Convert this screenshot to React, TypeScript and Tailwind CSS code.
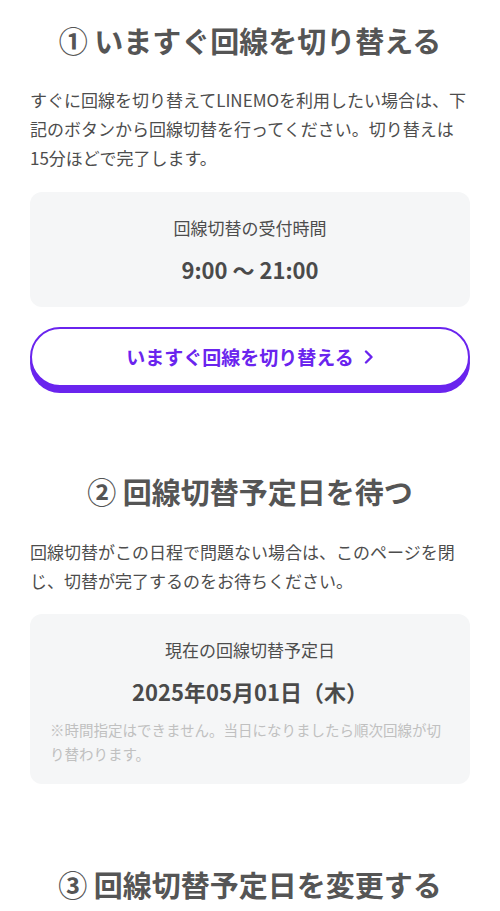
import React from 'react';

const PURPLE = '#6a24ee';

const Heading: React.FC<{ children: React.ReactNode; className?: string }> = ({
  children,
  className = '',
}) => (
  <h2
    className={`text-center text-[29px] font-bold leading-[1.5] text-[#555555] ${className}`}
  >
    {children}
  </h2>
);

const InfoBox: React.FC<{ label: string; value: string; note?: string }> = ({
  label,
  value,
  note,
}) => (
  <div
    className={`rounded-[12px] bg-[#f5f6f7] px-[20px] pt-[22px] ${note ? 'pb-[19px]' : 'pb-[21px]'}`}
  >
    <p className="text-center text-[17px] leading-[27px] text-[#4d4d4d]">{label}</p>
    <p className="mt-[12px] text-center text-[22px] font-bold leading-[33px] text-[#4a4a4a]">
      {value}
    </p>
    {note && (
      <p className="mt-[10px] text-[14.5px] leading-[23.5px] text-[#c0c0c0]">{note}</p>
    )}
  </div>
);

const App: React.FC = () => {
  return (
    <div
      className="min-h-[911px] bg-white px-[30px]"
      style={{ fontFamily: '"Noto Sans CJK JP", "Noto Sans", sans-serif' }}
    >
      {/* step 1 */}
      <section className="pt-[19px]">
        <Heading>① いますぐ回線を切り替える</Heading>
        <p className="mt-[22px] text-[17px] leading-[1.72] text-[#4d4d4d]">
          すぐに回線を切り替えてLINEMOを利用したい場合は、下記のボタンから回線切替を行ってください。切り替えは15分ほどで完了します。
        </p>
        <div className="mt-[20px]">
          <InfoBox label="回線切替の受付時間" value="9:00 〜 21:00" />
        </div>
        <button
          type="button"
          className="mt-[20px] flex h-[60px] w-full items-center justify-center gap-[10px] rounded-full border-2 border-[#6a24ee] bg-white shadow-[0_6px_0_#6a24ee]"
        >
          <span className="text-[19px] font-bold text-[#6a24ee]">いますぐ回線を切り替える</span>
          <svg width="10" height="14" viewBox="0 0 10 14" fill="none">
            <polyline
              points="2,1.5 7.5,7 2,12.5"
              stroke={PURPLE}
              strokeWidth="2.4"
              strokeLinecap="round"
              strokeLinejoin="round"
            />
          </svg>
        </button>
      </section>

      {/* step 2 */}
      <section className="mt-[83px]">
        <Heading>② 回線切替予定日を待つ</Heading>
        <p className="mt-[23px] text-[17px] leading-[1.72] text-[#4d4d4d]">
          回線切替がこの日程で問題ない場合は、このページを閉じ、切替が完了するのをお待ちください。
        </p>
        <div className="mt-[19px]">
          <InfoBox
            label="現在の回線切替予定日"
            value="2025年05月01日（木）"
            note="※時間指定はできません。当日になりましたら順次回線が切り替わります。"
          />
        </div>
      </section>

      {/* step 3 */}
      <section className="mt-[79px] pb-[40px]">
        <Heading>③ 回線切替予定日を変更する</Heading>
      </section>
    </div>
  );
};

export default App;
